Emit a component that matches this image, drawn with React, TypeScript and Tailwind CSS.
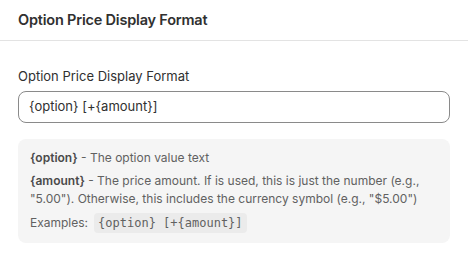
import React from 'react';

const font = { fontFamily: 'Inter, "Noto Sans", sans-serif' };

export default function App() {
  return (
    <div className="w-[468px] h-[255px] bg-white text-[#303030]" style={font}>
      <div className="h-[41px] px-[18px] flex items-center border-b border-[#e3e3e3]">
        <h2 className="text-[14.5px] font-semibold tracking-[-0.2px] text-[#303030] -mt-[1px]">Option Price Display Format</h2>
      </div>
      <div className="px-[18px] pt-[26px]">
        <label className="block text-[13px] leading-[18px] text-[#303030]">Option Price Display Format</label>
        <div className="mt-[6px] h-[32px] rounded-[8px] border border-[#8a8a8a] flex items-center px-[10px] text-[13px] text-[#303030]">
          {'{option} [+{amount}]'}
        </div>
        <div className="mt-[16px] rounded-[8px] bg-[#f5f5f5] px-[12px] pt-[10px] pb-[10px] flex flex-col gap-[5px] text-[12px] leading-[18px] text-[#616161]">
          <div>
            <span className="font-semibold text-[#4a4a4a]">{'{option}'}</span> - The option value text
          </div>
          <div>
            <span className="font-semibold text-[#4a4a4a]">{'{amount}'}</span> - The price amount. If is used, this is just the number (e.g., "5.00"). Otherwise, this includes the currency symbol (e.g., "$5.00")
          </div>
          <div className="flex items-center">
            Examples:
            <code className="ml-[6px] px-[4px] rounded-[4px] bg-[#ebebeb] text-[12px] leading-[20px] text-[#616161] font-['DejaVu_Sans_Mono',monospace]">{'{option} [+{amount}]'}</code>
          </div>
        </div>
      </div>
    </div>
  );
}
